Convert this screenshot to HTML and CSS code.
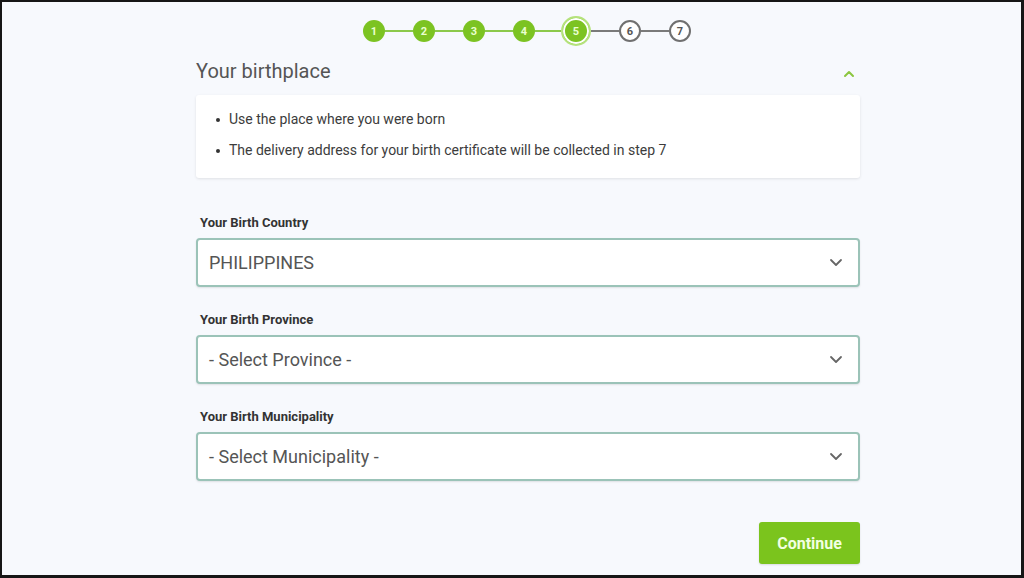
FILE: index.html
```html
<!DOCTYPE html>
<html lang="en">
<head>
<meta charset="utf-8">
<title>Your birthplace</title>
<link rel="stylesheet" href="styles.css">
</head>
<body>
<div class="frame">
  <div class="col">
    <div class="stepper">
      <span class="step done">1</span><span class="line green"></span>
      <span class="step done">2</span><span class="line green"></span>
      <span class="step done">3</span><span class="line green"></span>
      <span class="step done">4</span><span class="line green short"></span>
      <span class="step current">5</span><span class="line gray"></span>
      <span class="step todo">6</span><span class="line gray"></span>
      <span class="step todo">7</span>
    </div>

    <div class="header">
      <h1 class="title">Your birthplace</h1>
      <svg class="chev-up" width="12" height="8" viewBox="0 0 12 8"><path d="M2 6 L6 2 L10 6" fill="none" stroke="#8cc63f" stroke-width="2" stroke-linecap="round" stroke-linejoin="round"/></svg>
    </div>

    <div class="card">
      <ul class="notes">
        <li>Use the place where you were born</li>
        <li>The delivery address for your birth certificate will be collected in step 7</li>
      </ul>
    </div>

    <div class="field">
      <div class="label">Your Birth Country</div>
      <div class="select"><span class="value">PHILIPPINES</span>
        <svg class="chev" width="14" height="9" viewBox="0 0 14 9"><path d="M2 2 L7 7 L12 2" fill="none" stroke="#666" stroke-width="1.8" stroke-linecap="round" stroke-linejoin="round"/></svg>
      </div>
    </div>
    <div class="field">
      <div class="label">Your Birth Province</div>
      <div class="select"><span class="value">- Select Province -</span>
        <svg class="chev" width="14" height="9" viewBox="0 0 14 9"><path d="M2 2 L7 7 L12 2" fill="none" stroke="#666" stroke-width="1.8" stroke-linecap="round" stroke-linejoin="round"/></svg>
      </div>
    </div>
    <div class="field">
      <div class="label">Your Birth Municipality</div>
      <div class="select"><span class="value">- Select Municipality -</span>
        <svg class="chev" width="14" height="9" viewBox="0 0 14 9"><path d="M2 2 L7 7 L12 2" fill="none" stroke="#666" stroke-width="1.8" stroke-linecap="round" stroke-linejoin="round"/></svg>
      </div>
    </div>

    <div class="actions">
      <button class="btn">Continue</button>
    </div>
  </div>
</div>
</body>
</html>
```

FILE: styles.css
```css
* { box-sizing: border-box; }
html, body { margin: 0; padding: 0; }
body {
  font-family: Roboto, "Liberation Sans", Arial, sans-serif;
  background: #111;
}
.frame {
  width: 1024px;
  height: 578px;
  border-top: 2px solid #161616;
  border-left: 2px solid #161616;
  border-right: 3px solid #161616;
  border-bottom: 3px solid #161616;
  background: #f7f9fd;
  overflow: hidden;
}
.col {
  width: 664px;
  margin-left: 194px;
}
.stepper {
  display: flex;
  align-items: center;
  height: 30px;
  margin-top: 14px;
  margin-left: 167px;
}
.step {
  width: 22px;
  height: 22px;
  border-radius: 50%;
  display: flex;
  align-items: center;
  justify-content: center;
  font-size: 11px;
  font-weight: 700;
  flex: none;
}
.step.done {
  background: #7cc322;
  color: #eaffd0;
}
.step.current {
  width: 30px;
  height: 30px;
  background: #7cc322;
  color: #eaffd0;
  border: 2px solid #b5e27c;
  box-shadow: inset 0 0 0 2px #fff;
}
.step.todo {
  background: #fff;
  border: 2px solid #707070;
  color: #555;
}
.line {
  width: 28px;
  height: 2px;
  flex: none;
}
.line.short { width: 26px; }
.line.green { background: #8cc94a; }
.line.gray { background: #7a7a7a; }

.header {
  display: flex;
  justify-content: space-between;
  align-items: center;
  margin-top: 13px;
  height: 24px;
  padding-right: 5px;
}
.title {
  margin: 0;
  font-size: 20px;
  font-weight: 400;
  color: #555;
  line-height: 24px;
}
.chev-up { margin-top: 6px; }

.card {
  margin-top: 12px;
  background: #fff;
  border-radius: 3px;
  box-shadow: 0 1px 3px rgba(0,0,0,0.10);
  padding: 9px 0 12px;
}
.notes {
  list-style: none;
  margin: 0;
  padding: 0 0 0 33px;
}
.notes li {
  position: relative;
  font-size: 14px;
  line-height: 31px;
  color: #3c3c3c;
}
.notes li::before {
  content: "";
  position: absolute;
  left: -13px;
  top: 14px;
  width: 4px;
  height: 4px;
  border-radius: 50%;
  background: #333;
}

.field { margin-top: 37px; }
.field + .field { margin-top: 25px; }
.label {
  font-size: 13px;
  font-weight: 700;
  color: #333;
  line-height: 16px;
  padding-left: 4px;
}
.select {
  margin-top: 7px;
  height: 49px;
  background: #fff;
  border: 2px solid #9bc3b8;
  border-radius: 4px;
  box-shadow: 0 1px 2px rgba(0,0,0,0.10);
  display: flex;
  align-items: center;
  justify-content: space-between;
  padding: 0 15px 0 11px;
}
.value {
  font-size: 18px;
  color: #555;
}
.actions {
  display: flex;
  justify-content: flex-end;
  margin-top: 41px;
}
.btn {
  width: 101px;
  height: 42px;
  background: #7bc41d;
  border: none;
  border-radius: 3px;
  color: #f2ffe2;
  font-family: Roboto, "Liberation Sans", Arial, sans-serif;
  font-size: 16px;
  font-weight: 700;
  box-shadow: 0 1px 2px rgba(0,0,0,0.12);
}
```
